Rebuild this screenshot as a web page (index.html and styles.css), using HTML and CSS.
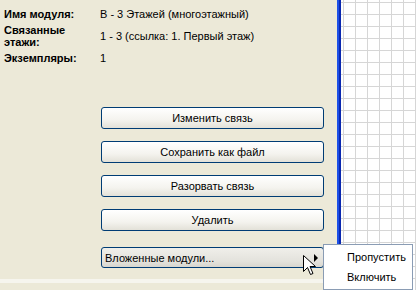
FILE: index.html
```html
<!DOCTYPE html>
<html lang="ru">

<head>
  <meta charset="UTF-8">
  <title>Модуль</title>
  <link rel="stylesheet" href="styles.css">
</head>

<body>
  <div class="window">
    <div class="panel">
      <div class="info">
        <div class="label">Имя модуля:</div>
        <div class="value">В - 3 Этажей (многоэтажный)</div>
        <div class="label">Связанные этажи:</div>
        <div class="value">1 - 3 (ссылка: 1. Первый этаж)</div>
        <div class="label">Экземпляры:</div>
        <div class="value">1</div>
      </div>
      <div class="actions">
        <button class="btn">Изменить связь</button>
        <button class="btn">Сохранить как файл</button>
        <button class="btn">Разорвать связь</button>
        <button class="btn">Удалить</button>
        <button class="btn btn-sub">Вложенные модули...<span class="arrow"></span></button>
      </div>
      <div class="footer"></div>
    </div>
    <div class="divider"></div>
    <div class="canvas"></div>

    <ul class="menu">
      <li>Пропустить</li>
      <li>Включить</li>
    </ul>

    <svg class="cursor" width="13" height="21" viewBox="0 0 13 21">
      <path d="M0.5 0.5 L0.5 16.5 L4.5 12.5 L7.5 19.5 L10 18.5 L7 11.5 L12.5 11.5 Z" fill="#fff" stroke="#000" stroke-width="1" stroke-linejoin="miter"/>
    </svg>
  </div>
</body>

</html>
```

FILE: styles.css
```css
body {
  margin: 0;
  background-color: #ECE9D8;
  font-family: "Liberation Sans", Arial, sans-serif;
  font-size: 11px;
  color: #000;
}

.window {
  position: relative;
  display: flex;
  width: 416px;
  height: 290px;
  overflow: hidden;
}

.panel {
  width: 337px;
  display: flex;
  flex-direction: column;
  background-color: #ECE9D8;
}

.info {
  display: grid;
  grid-template-columns: 96px 1fr;
  row-gap: 4px;
  align-items: center;
  padding: 8px 0 0 4px;
  line-height: 12px;
}

.label {
  font-weight: bold;
  width: 80px;
}

.actions {
  display: flex;
  flex-direction: column;
  gap: 12px;
  margin: 43px 0 0 101px;
  width: 223px;
}

.btn {
  height: 22px;
  padding: 0;
  font-family: inherit;
  font-size: 11px;
  color: #000;
  border: 1px solid #003C74;
  border-radius: 3px;
  background: linear-gradient(#FFFFFF, #F4F3EE 60%, #E3E1D8);
}

.btn-sub {
  margin-top: 4px;
  height: 21px;
  display: flex;
  align-items: center;
  justify-content: space-between;
  padding: 0 5px 0 3px;
  background: linear-gradient(#F0EFEA, #E3E2DC 70%, #D8D6CE);
}

.arrow {
  width: 0;
  height: 0;
  border-top: 4px solid transparent;
  border-bottom: 4px solid transparent;
  border-left: 4px solid #000;
}

.footer {
  margin-top: auto;
  height: 4px;
  margin-bottom: 7px;
  background-color: #F6F5EE;
}

.divider {
  width: 4px;
  background: linear-gradient(to right, #1C4FE8 0, #1C4FE8 2px, #0A28B0 2px);
}

.canvas {
  flex: 1;
  background-color: #fff;
  background-image:
    linear-gradient(to right, #D6D6D6 1px, transparent 1px),
    linear-gradient(to bottom, #D6D6D6 1px, transparent 1px);
  background-size: 12px 12px;
  background-position: 2px 2px;
}

.menu {
  position: absolute;
  left: 323px;
  top: 244px;
  width: 88px;
  margin: 0;
  padding: 2px 0;
  list-style: none;
  background-color: #fff;
  border: 1px solid #8A9CB4;
}

.menu li {
  height: 20px;
  line-height: 20px;
  padding-left: 23px;
}

.cursor {
  position: absolute;
  left: 303px;
  top: 255px;
}
```
